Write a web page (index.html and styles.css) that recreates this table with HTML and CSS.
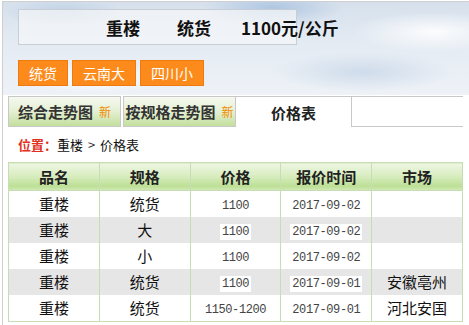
FILE: index.html
```html
<!DOCTYPE html>
<html lang="zh-CN">
<head>
<meta charset="utf-8">
<title>重楼 价格表</title>
<link rel="stylesheet" href="styles.css">
</head>
<body>
<div class="frame">
  <div class="sky">
    <div class="headbox">
      <span class="h-name">重楼</span><span class="h-spec">统货</span><span class="h-price">1100元/公斤</span>
    </div>
    <div class="btns">
      <a class="btn">统货</a><a class="btn">云南大</a><a class="btn">四川小</a>
    </div>
  </div>
  <div class="tabs">
    <div class="tab">综合走势图<span class="new">新</span></div>
    <div class="tab">按规格走势图<span class="new">新</span></div>
    <div class="tab active">价格表</div>
    <div class="tab-rest"></div>
  </div>
  <div class="crumb"><b class="loc">位置：</b>重楼 <span class="gt">&gt;</span> 价格表</div>
  <table class="grid">
    <thead>
      <tr><th>品名</th><th>规格</th><th>价格</th><th>报价时间</th><th>市场</th></tr>
    </thead>
    <tbody>
      <tr><td>重楼</td><td>统货</td><td><span class="val">1100</span></td><td><span class="val">2017-09-02</span></td><td></td></tr>
      <tr class="alt"><td>重楼</td><td>大</td><td><span class="val">1100</span></td><td><span class="val">2017-09-02</span></td><td></td></tr>
      <tr><td>重楼</td><td>小</td><td><span class="val">1100</span></td><td><span class="val">2017-09-02</span></td><td></td></tr>
      <tr class="alt"><td>重楼</td><td>统货</td><td><span class="val">1100</span></td><td><span class="val">2017-09-01</span></td><td>安徽亳州</td></tr>
      <tr><td>重楼</td><td>统货</td><td><span class="val">1150-1200</span></td><td><span class="val">2017-09-01</span></td><td>河北安国</td></tr>
    </tbody>
  </table>
</div>
</body>
</html>
```

FILE: styles.css
```css
html, body {
  margin: 0;
  padding: 0;
  background: #fff;
}
body {
  font-family: "Noto Sans CJK SC", "Noto Sans", sans-serif;
  color: #111;
  overflow: hidden;
}
.frame {
  margin: 1px 0 0 2px;
  width: 480px;
  border-left: 1px solid #cfcfcf;
  border-top: 1px solid #cfcfcf;
  min-height: 330px;
}
.sky {
  height: 93px;
  padding: 7px 0 0 15px;
  box-sizing: border-box;
  background:
    radial-gradient(ellipse 70px 18px at 270px 6px, rgba(170,195,225,0.9), rgba(170,195,225,0) 100%),
    radial-gradient(ellipse 60px 14px at 60px 10px, rgba(185,205,228,0.8), rgba(185,205,228,0) 100%),
    radial-gradient(ellipse 80px 20px at 430px 30px, rgba(255,255,255,0.9), rgba(255,255,255,0) 100%),
    radial-gradient(ellipse 90px 20px at 360px 70px, rgba(200,215,232,0.8), rgba(200,215,232,0) 100%),
    radial-gradient(ellipse 80px 16px at 90px 75px, rgba(255,255,255,0.9), rgba(255,255,255,0) 100%),
    linear-gradient(#d6e0ec, #e4ebf3 45%, #eef2f7 100%);
}
.headbox {
  width: 279px;
  height: 36px;
  box-sizing: border-box;
  border: 1px solid rgba(190,196,204,0.8);
  background: rgba(245,246,248,0.72);
  display: flex;
  align-items: center;
  white-space: nowrap;
  font-size: 17px;
  font-weight: bold;
  color: #111;
  padding-left: 87px;
}
.h-spec { margin-left: 37px; }
.h-price { margin-left: 30px; }
.btns {
  display: flex;
  gap: 4px;
  margin-top: 15px;
}
.btn {
  display: block;
  height: 26px;
  line-height: 24px;
  box-sizing: border-box;
  padding: 0 10px;
  background: #fd8b1c;
  border: 1px solid #ee7a10;
  color: #fff;
  font-size: 14px;
}
.tabs {
  display: flex;
  margin: 1px 0 0 5px;
  width: 455px;
  height: 31px;
}
.tab {
  width: 113px;
  box-sizing: border-box;
  border: 1px solid #c8c8c8;
  background: linear-gradient(#f6f9f0, #e4efd2 50%, #c2df9c);
  font-size: 15px;
  font-weight: bold;
  color: #333;
  display: flex;
  align-items: center;
  justify-content: center;
  margin-right: 2px;
  white-space: nowrap;
}
.tab:nth-child(2) { margin-right: 0; }
.new {
  font-size: 12px;
  font-weight: normal;
  color: #f08c00;
  margin-left: 6px;
}
.tab.active {
  width: 115px;
  background: #fff;
  border: none;
  border-top: 1px solid #c8c8c8;
  margin-right: 0;
  color: #222;
}
.tab-rest {
  flex: 1;
  border: 1px solid #c8c8c8;
  border-right: none;
}
.crumb {
  margin: 8px 0 0 15px;
  font-size: 13px;
  color: #111;
  height: 20px;
  line-height: 20px;
}
.loc { color: #e3301c; }
.gt { color: #333; margin: 0 2px; }
.grid {
  margin: 7px 0 0 5px;
  width: 455px;
  border-collapse: collapse;
  table-layout: fixed;
  border: 1px solid #c9ddb4;
}
.grid th, .grid td {
  border-left: 1px solid #c9ddb4;
  border-right: 1px solid #c9ddb4;
  text-align: center;
  padding: 0;
  line-height: 20px;
}
.grid th {
  height: 27px;
  font-size: 15px;
  font-weight: bold;
  color: #222;
  background: linear-gradient(#eef6e4, #d6ecbc 50%, #bcdf94 85%, #d3eabb);
  border-bottom: 1px solid #c9ddb4;
}
.grid td {
  height: 26px;
  font-size: 15px;
  color: #111;
}
.grid tr.alt td { background: #e6e6e6; }
.val {
  font-family: "Liberation Mono", monospace;
  font-size: 12px;
  letter-spacing: -0.4px;
  color: #444;
  background: #fff;
  padding: 1px 2px;
}
```
